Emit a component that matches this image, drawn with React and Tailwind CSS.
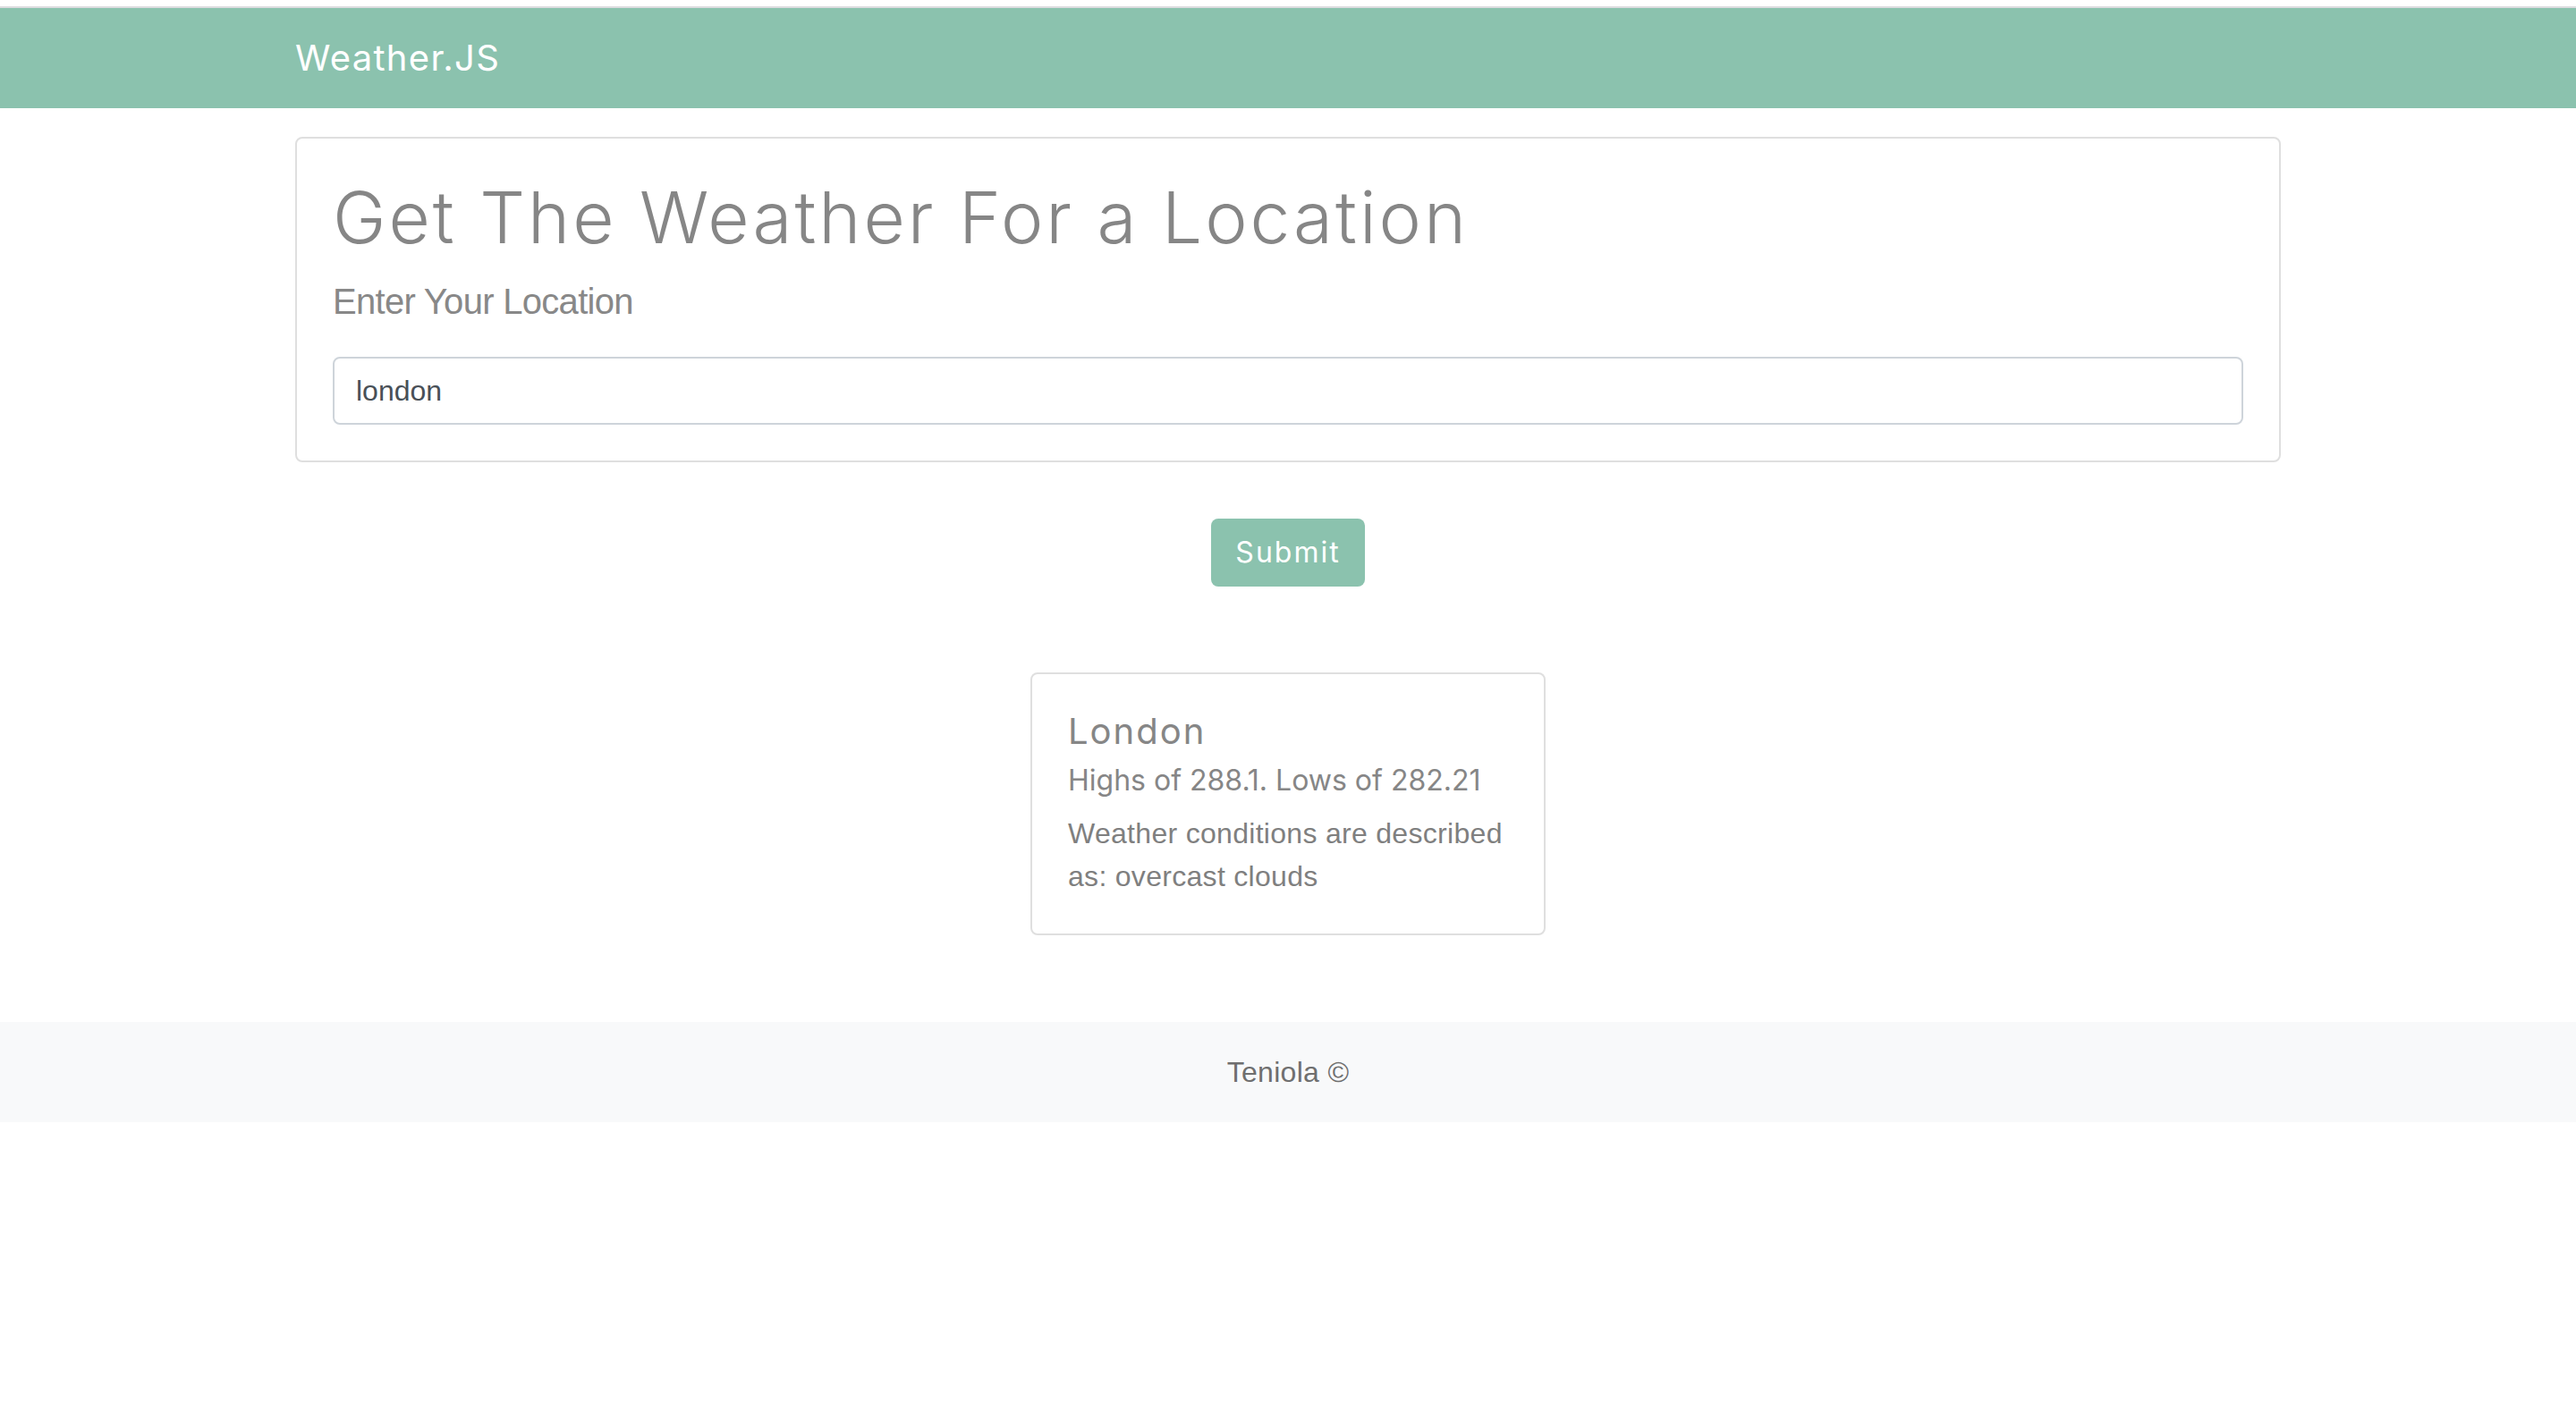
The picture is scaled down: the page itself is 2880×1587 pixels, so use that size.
export default function App() {
  return (
    <div className="min-h-screen bg-white">
      <div className="h-[7px] bg-white" />
      <div className="h-[2px] bg-[#dcdcdf]" />
      <nav className="h-[112px] bg-[#8bc2ae] flex items-center">
        <div className="w-[2280px] mx-auto px-[30px]">
          <span className="text-[40px] text-white font-normal font-['Inter',sans-serif] tracking-[1.3px]">Weather.JS</span>
        </div>
      </nav>
      <main className="w-[2280px] mx-auto px-[30px]">
        <div className="mt-[32px] border-2 border-[#dfdfdf] rounded-[8px] p-[40px]">
          <h1 className="text-[80px] leading-[96px] font-light text-[#868686] font-['Inter',sans-serif] tracking-[3px] mb-[16px]">
            Get The Weather For a Location
          </h1>
          <p className="text-[40px] leading-[60px] text-[#888888] font-['Liberation_Sans',Arial,sans-serif] tracking-[-0.7px] mb-[32px]">
            Enter Your Location
          </p>
          <div className="h-[76px] border-2 border-[#ced4da] rounded-[8px] px-[24px] flex items-center">
            <span className="text-[32px] text-[#495057] font-['Liberation_Sans',Arial,sans-serif]">london</span>
          </div>
        </div>
        <div className="flex justify-center mt-[63px]">
          <button className="w-[172px] h-[76px] rounded-[8px] bg-[#8bc2ae] text-white text-[32px] font-['Inter',sans-serif] tracking-[2px] flex items-center justify-center">
            Submit
          </button>
        </div>
        <div className="flex justify-center mt-[96px]">
          <div className="w-[576px] border-2 border-[#dfdfdf] rounded-[8px] px-[40px] pt-[40px] pb-[40px]">
            <h5 className="text-[40px] leading-[48px] text-[#868686] font-['Inter',sans-serif] tracking-[2px] mb-[12px]">London</h5>
            <h6 className="text-[32px] leading-[38px] text-[#868686] font-['Inter',sans-serif] mb-[16px]">
              Highs of 288.1. Lows of 282.21
            </h6>
            <p className="text-[32px] leading-[48px] text-[#7f7f7f] font-['Liberation_Sans',Arial,sans-serif] tracking-[0.3px]">
              Weather conditions are described as: overcast clouds
            </p>
          </div>
        </div>
      </main>
      <footer className="mt-[97px] bg-[#f8f9fa] h-[112px] flex items-center justify-center">
        <span className="text-[32px] text-[#6f6f6f] font-['Liberation_Sans',Arial,sans-serif] tracking-[0.3px]">Teniola ©</span>
      </footer>
    </div>
  );
}
